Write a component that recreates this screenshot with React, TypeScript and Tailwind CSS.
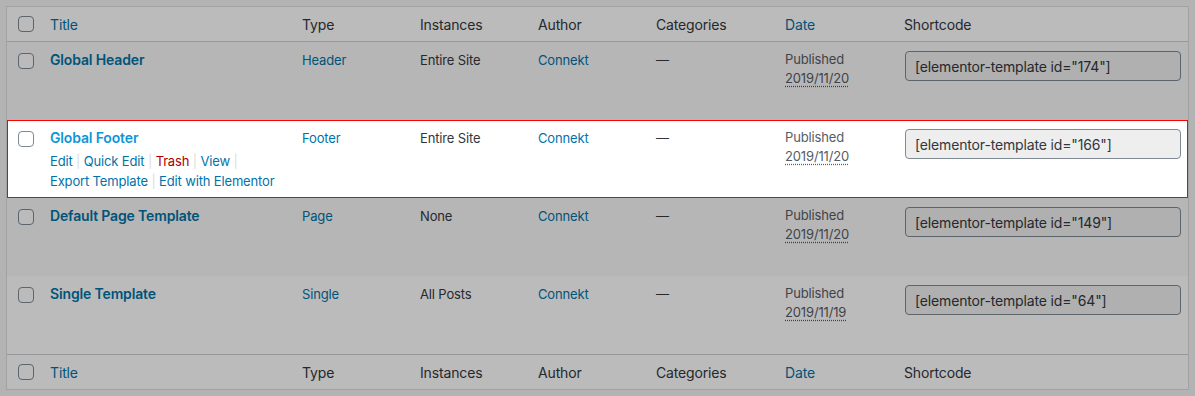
type Template = {
  id: string;
  title: string;
  type: string;
  instances: string;
  date: string;
  striped: boolean;
  active?: boolean;
};

const TEMPLATES: readonly Template[] = [
  { id: '174', title: 'Global Header', type: 'Header', instances: 'Entire Site', date: '2019/11/20', striped: true },
  { id: '166', title: 'Global Footer', type: 'Footer', instances: 'Entire Site', date: '2019/11/20', striped: false, active: true },
  { id: '149', title: 'Default Page Template', type: 'Page', instances: 'None', date: '2019/11/20', striped: true },
  { id: '64', title: 'Single Template', type: 'Single', instances: 'All Posts', date: '2019/11/19', striped: false },
];

function Checkbox({ active }: { active?: boolean }) {
  return (
    <span
      className={
        'block h-4 w-4 rounded-[4px] border ' +
        (active ? 'border-[#7e8993] bg-white' : 'border-[#5c646c] bg-[#bbbbbb]')
      }
    />
  );
}

function HeadRow({ top }: { top?: boolean }) {
  return (
    <div
      className={
        'flex h-[35px] items-center bg-[#bbbbbb] text-[14px] text-[#25282c] ' +
        (top ? 'border-b border-[#96989b]' : 'border-t border-[#96989b]')
      }
    >
      <div className="w-[33px] pl-[11px]">
        <Checkbox />
      </div>
      <div className="w-[252px] pl-[10px] text-[#005479]">Title</div>
      <div className="w-[118px] pl-[10px]">Type</div>
      <div className="w-[118px] pl-[10px]">Instances</div>
      <div className="w-[118px] pl-[10px]">Author</div>
      <div className="w-[129px] pl-[10px]">Categories</div>
      <div className="w-[119px] pl-[10px] text-[#005479]">Date</div>
      <div className="flex-1 pl-[10px]">Shortcode</div>
    </div>
  );
}

function Sep() {
  return <span className="text-[#dddddd]"> | </span>;
}

function Row({ t }: { t: Template }) {
  const a = t.active;
  const link = a ? 'text-[#0073aa]' : 'text-[#005479]';
  const text = a ? 'text-[#32373c]' : 'text-[#25282c]';
  const bg = a
    ? 'bg-white shadow-[inset_0_0_0_1px_#ff0000]'
    : t.striped
      ? 'bg-[#b6b6b6]'
      : 'bg-[#bbbbbb]';

  return (
    <div className={'flex h-[78px] items-start text-[13px] ' + bg}>
      <div className="w-[33px] pl-[11px] pt-[11px]">
        <Checkbox active={a} />
      </div>
      <div className="w-[252px] pl-[10px] pt-[8px]">
        <div className={'text-[14px] font-semibold leading-5 ' + (a ? 'text-[#0d96d8]' : 'text-[#005479]')}>
          {t.title}
        </div>
        {a && (
          <div className="pt-[3px] leading-5 text-[#0073aa]">
            <div>
              Edit
              <Sep />
              Quick Edit
              <Sep />
              <span className="text-[#aa0000]">Trash</span>
              <Sep />
              View
              <Sep />
            </div>
            <div>
              Export Template
              <Sep />
              Edit with Elementor
            </div>
          </div>
        )}
      </div>
      <div className={'w-[118px] pl-[10px] pt-[8px] leading-5 ' + link}>{t.type}</div>
      <div className={'w-[118px] pl-[10px] pt-[8px] leading-5 ' + text}>{t.instances}</div>
      <div className={'w-[118px] pl-[10px] pt-[8px] leading-5 ' + link}>Connekt</div>
      <div className={'w-[129px] pl-[10px] pt-[8px] leading-5 ' + text}>—</div>
      <div className={'w-[119px] pl-[10px] pt-[8px] leading-[19px] ' + (a ? 'text-[#555d66]' : 'text-[#3e4449]')}>
        <div>Published</div>
        <div className="underline decoration-dotted underline-offset-[3px]">{t.date}</div>
      </div>
      <div className="flex-1 pl-[11px] pr-[7px] pt-[9px]">
        <div
          className={
            'flex h-[30px] items-center rounded-[4px] border px-[9px] text-[14px] ' +
            (a
              ? 'border-[#7e8993] bg-[#eeeeee] text-[#32373c]'
              : 'border-[#5c646c] bg-[#b0b0b0] text-[#25282c]')
          }
        >
          [elementor-template id="{t.id}"]
        </div>
      </div>
    </div>
  );
}

export default function App() {
  return (
    <div
      className="min-h-[396px] w-[1195px] bg-[#b3b3b3] pl-[6px] pr-[6px] pt-[6px] tracking-[-0.15px]"
      style={{ fontFamily: 'Inter, "Liberation Sans", sans-serif' }}
    >
      <div className="border border-[#a0a2a4]">
        <HeadRow top />
        {TEMPLATES.map((t) => (
          <Row key={t.id} t={t} />
        ))}
        <HeadRow />
      </div>
    </div>
  );
}
